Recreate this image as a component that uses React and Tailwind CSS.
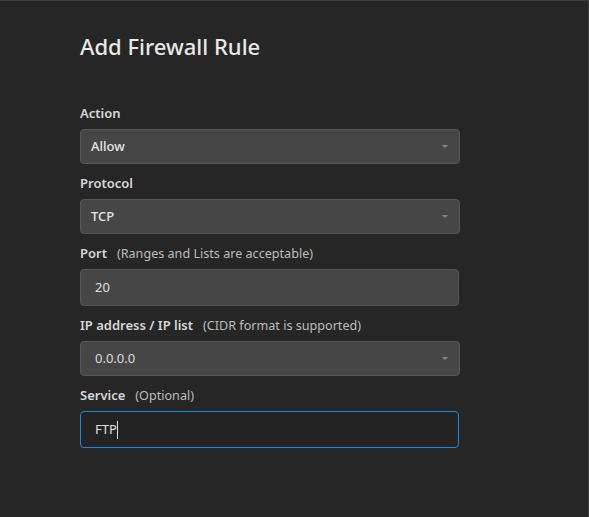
const FONT = { fontFamily: '"Noto Sans", "Open Sans", sans-serif' }

function Label({ title, hint }) {
  return (
    <div className="flex items-center gap-[10px] mb-[7px] h-[16px]">
      <span className="text-[13px] font-semibold text-[#d8d8d8]">{title}</span>
      {hint && <span className="text-[12.6px] text-[#bdbdbd]">{hint}</span>}
    </div>
  )
}

function Select({ value, plain }) {
  return (
    <div
      className={
        plain
          ? 'w-[380px] h-[35px] rounded-[4px] border border-[#575757] bg-[#464646] flex items-center justify-between pl-[14px] pr-[11px]'
          : 'w-[380px] h-[35px] rounded-[4px] border border-[#575757] bg-[#464646] flex items-center justify-between pl-[10px] pr-[11px]'
      }
    >
      <span className={plain ? 'text-[13px] text-[#dcdcdc]' : 'text-[13px] font-medium text-[#e6e6e6]'}>{value}</span>
      <span className="w-0 h-0 border-l-[3.5px] border-r-[3.5px] border-t-[3.5px] border-l-transparent border-r-transparent border-t-[#858585]" />
    </div>
  )
}

function Input({ value, focused }) {
  return (
    <div
      className={
        focused
          ? 'w-[379px] h-[37px] rounded-[4px] border border-[#1a8ae0] bg-[#232323] flex items-center pl-[14px]'
          : 'w-[379px] h-[37px] rounded-[4px] border border-[#575757] bg-[#464646] flex items-center pl-[14px]'
      }
    >
      <span className="text-[13px] text-[#e0e0e0]">{value}</span>
      {focused && <span className="w-px h-[18px] bg-[#e0e0e0]" />}
    </div>
  )
}

export default function App() {
  return (
    <div style={FONT} className="w-[589px] h-[517px] bg-[#262626] border-t border-r border-[#3c3c3c] px-[80px] pt-[30px]">
      <h1 className="text-[22px] font-medium text-[#e8e8e8] leading-[30px]">Add Firewall Rule</h1>

      <div className="mt-[45px] flex flex-col gap-[12px]">
        <div>
          <Label title="Action" />
          <Select value="Allow" />
        </div>
        <div>
          <Label title="Protocol" />
          <Select value="TCP" />
        </div>
        <div>
          <Label title="Port" hint="(Ranges and Lists are acceptable)" />
          <Input value="20" />
        </div>
        <div>
          <Label title="IP address / IP list" hint="(CIDR format is supported)" />
          <Select value="0.0.0.0" plain />
        </div>
        <div>
          <Label title="Service" hint="(Optional)" />
          <Input value="FTP" focused />
        </div>
      </div>
    </div>
  )
}
